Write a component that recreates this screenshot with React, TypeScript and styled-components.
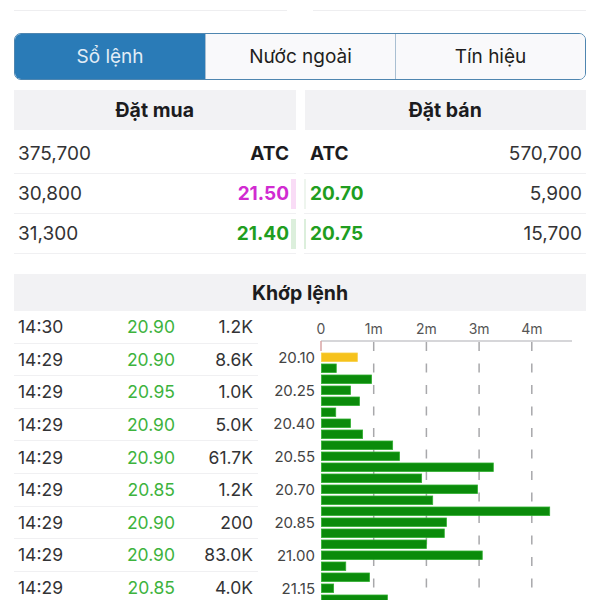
import styled, { createGlobalStyle } from "styled-components";

const GlobalStyle = createGlobalStyle`
  html, body {
    margin: 0;
    padding: 0;
    background: #ffffff;
    overflow: hidden;
  }
  body {
    font-family: Inter, "Liberation Sans", sans-serif;
    color: #2b2b2d;
  }
`;

const Page = styled.div`
  width: 600px;
  height: 600px;
  overflow: hidden;
  padding: 0 14px;
  box-sizing: border-box;
`;

const TopStrip = styled.div`
  display: flex;
  gap: 26px;
  height: 11px;
`;

const TopCell = styled.div`
  flex: 1;
  border-bottom: 1px solid #eeeef0;
`;

const Segmented = styled.div`
  margin-top: 22px;
  display: grid;
  grid-template-columns: repeat(3, 1fr);
  height: 47px;
  border: 1.5px solid #4f86b0;
  border-radius: 7px;
  overflow: hidden;
  box-sizing: border-box;
`;

const Segment = styled.div<{ $active?: boolean }>`
  display: flex;
  align-items: center;
  justify-content: center;
  font-size: 19px;
  background: ${({ $active }) => ($active ? "#2a7bb7" : "#f9f9fb")};
  color: ${({ $active }) => ($active ? "#e2edf6" : "#1e1e20")};
  & + & {
    border-left: 1px solid #a9bfd2;
  }
`;

const BookHead = styled.div`
  margin-top: 10px;
  display: grid;
  grid-template-columns: 1fr 1fr;
  gap: 9px;
`;

const HeadCell = styled.div`
  height: 40px;
  display: flex;
  align-items: center;
  justify-content: center;
  background: #f2f2f4;
  font-size: 19.5px;
  font-weight: 700;
  color: #1c1c1e;
`;

const BookBody = styled.div`
  margin-top: 4px;
  display: grid;
  grid-template-columns: 282px 282px;
  justify-content: space-between;
`;

const BookRow = styled.div`
  height: 40px;
  display: flex;
  align-items: center;
  border-bottom: 1px solid #f0f0f2;
  box-sizing: border-box;
  font-size: 19px;
`;

const Qty = styled.span<{ $right?: boolean }>`
  flex: 1;
  color: #333335;
  text-align: ${({ $right }) => ($right ? "right" : "left")};
  padding: ${({ $right }) => ($right ? "0 4px 0 0" : "0 0 0 4px")};
`;

const Price = styled.span<{ $color: string }>`
  font-weight: 700;
  color: ${({ $color }) => $color};
`;

const DepthBar = styled.span<{ $bg: string; $w: number; $side: "left" | "right" }>`
  width: ${({ $w }) => $w}px;
  height: 30px;
  background: ${({ $bg }) => $bg};
  margin: ${({ $side }) => ($side === "left" ? "0 0 0 2px" : "0 4px 0 0")};
`;

const MatchHead = styled(HeadCell)`
  margin-top: 20px;
  height: 37px;
`;

const TradeSection = styled.div`
  display: flex;
  gap: 4px;
`;

const TradeList = styled.div`
  width: 244px;
  flex-shrink: 0;
`;

const TradeRow = styled.div`
  height: 32.6px;
  display: grid;
  grid-template-columns: 1fr 60px 78px;
  align-items: center;
  padding: 0 5px 0 4px;
  border-bottom: 1px solid #f0f0f2;
  box-sizing: border-box;
  font-size: 17.5px;
  color: #333335;
`;

const TradePrice = styled.span`
  text-align: right;
  color: #3db33d;
`;

const TradeVol = styled.span`
  text-align: right;
`;

const ChartBox = styled.div`
  flex: 1;
`;

const PINK = "#d12bd1";
const GREEN = "#1f9e1f";

const bids = [
  { qty: "375,700", price: "ATC", color: "#1c1c1e", bar: "", w: 5 },
  { qty: "30,800", price: "21.50", color: PINK, bar: "#f9dcf6", w: 5 },
  { qty: "31,300", price: "21.40", color: GREEN, bar: "#dcefdc", w: 5 },
];

const asks = [
  { qty: "570,700", price: "ATC", color: "#1c1c1e", bar: "", w: 2 },
  { qty: "5,900", price: "20.70", color: GREEN, bar: "#eef5ee", w: 2 },
  { qty: "15,700", price: "20.75", color: GREEN, bar: "#dcefdc", w: 2 },
];

const trades = [
  ["14:30", "20.90", "1.2K"],
  ["14:29", "20.90", "8.6K"],
  ["14:29", "20.95", "1.0K"],
  ["14:29", "20.90", "5.0K"],
  ["14:29", "20.90", "61.7K"],
  ["14:29", "20.85", "1.2K"],
  ["14:29", "20.90", "200"],
  ["14:29", "20.90", "83.0K"],
  ["14:29", "20.85", "4.0K"],
];

// volume in millions per price step, starting at 20.10
const volumes = [
  0.68, 0.28, 0.95, 0.55, 0.72, 0.27, 0.55, 0.78, 1.35, 1.48, 3.26, 1.9, 2.96,
  2.11, 4.33, 2.37, 2.33, 1.99, 3.05, 0.46, 0.91, 0.23, 1.25,
];

const X0 = 59;
const UNIT = 52.7;
const AXIS_Y = 30;
const BAR_TOP = 42;
const PITCH = 11;

function VolumeChart() {
  return (
    <svg width="324" height="300" fontFamily="Inter, 'Liberation Sans', sans-serif">
      {[0, 1, 2, 3, 4].map((k) => (
        <text key={k} x={X0 + k * UNIT} y={23} fontSize="14" fill="#555" textAnchor="middle">
          {k === 0 ? "0" : `${k}m`}
        </text>
      ))}
      <line x1={X0} x2={310} y1={AXIS_Y} y2={AXIS_Y} stroke="#c9c9cc" strokeWidth="1.5" />
      {[1, 2, 3, 4].map((k) => (
        <line
          key={k}
          x1={X0 + k * UNIT}
          x2={X0 + k * UNIT}
          y1={AXIS_Y + 1}
          y2={300}
          stroke="#a8a8ab"
          strokeWidth="1.5"
          strokeDasharray="9 12.5"
        />
      ))}
      <line x1={X0} x2={X0} y1={AXIS_Y} y2={AXIS_Y + 10} stroke="#d8a4a4" strokeWidth="1.5" />
      {volumes.map((v, i) => {
        const y = BAR_TOP + i * PITCH;
        const price = (20.1 + i * 0.05).toFixed(2);
        return (
          <g key={i}>
            <rect
              x={X0 + 0.5}
              y={y}
              width={v * UNIT}
              height={8.5}
              fill={i === 0 ? "#f6c21c" : "#0b8b0b"}
              stroke={i === 0 ? "#f8cf45" : "#2fae2f"}
              strokeWidth="0.8"
            />
            {i % 3 === 0 && (
              <text x={53} y={y + 9.5} fontSize="15" fill="#444" textAnchor="end">
                {price}
              </text>
            )}
          </g>
        );
      })}
    </svg>
  );
}

export default function App() {
  return (
    <>
      <GlobalStyle />
      <Page>
        <TopStrip>
          <TopCell />
          <TopCell />
        </TopStrip>
        <Segmented>
          <Segment $active>Sổ lệnh</Segment>
          <Segment>Nước ngoài</Segment>
          <Segment>Tín hiệu</Segment>
        </Segmented>
        <BookHead>
          <HeadCell>Đặt mua</HeadCell>
          <HeadCell>Đặt bán</HeadCell>
        </BookHead>
        <BookBody>
          <div>
            {bids.map((b) => (
              <BookRow key={b.qty}>
                <Qty>{b.qty}</Qty>
                <Price $color={b.color}>{b.price}</Price>
                <DepthBar $bg={b.bar || "transparent"} $w={b.w} $side="left" />
              </BookRow>
            ))}
          </div>
          <div>
            {asks.map((a) => (
              <BookRow key={a.qty}>
                <DepthBar $bg={a.bar || "transparent"} $w={a.w} $side="right" />
                <Price $color={a.color}>{a.price}</Price>
                <Qty $right>{a.qty}</Qty>
              </BookRow>
            ))}
          </div>
        </BookBody>
        <MatchHead>Khớp lệnh</MatchHead>
        <TradeSection>
          <TradeList>
            {trades.map((t, i) => (
              <TradeRow key={i}>
                <span>{t[0]}</span>
                <TradePrice>{t[1]}</TradePrice>
                <TradeVol>{t[2]}</TradeVol>
              </TradeRow>
            ))}
          </TradeList>
          <ChartBox>
            <VolumeChart />
          </ChartBox>
        </TradeSection>
      </Page>
    </>
  );
}
